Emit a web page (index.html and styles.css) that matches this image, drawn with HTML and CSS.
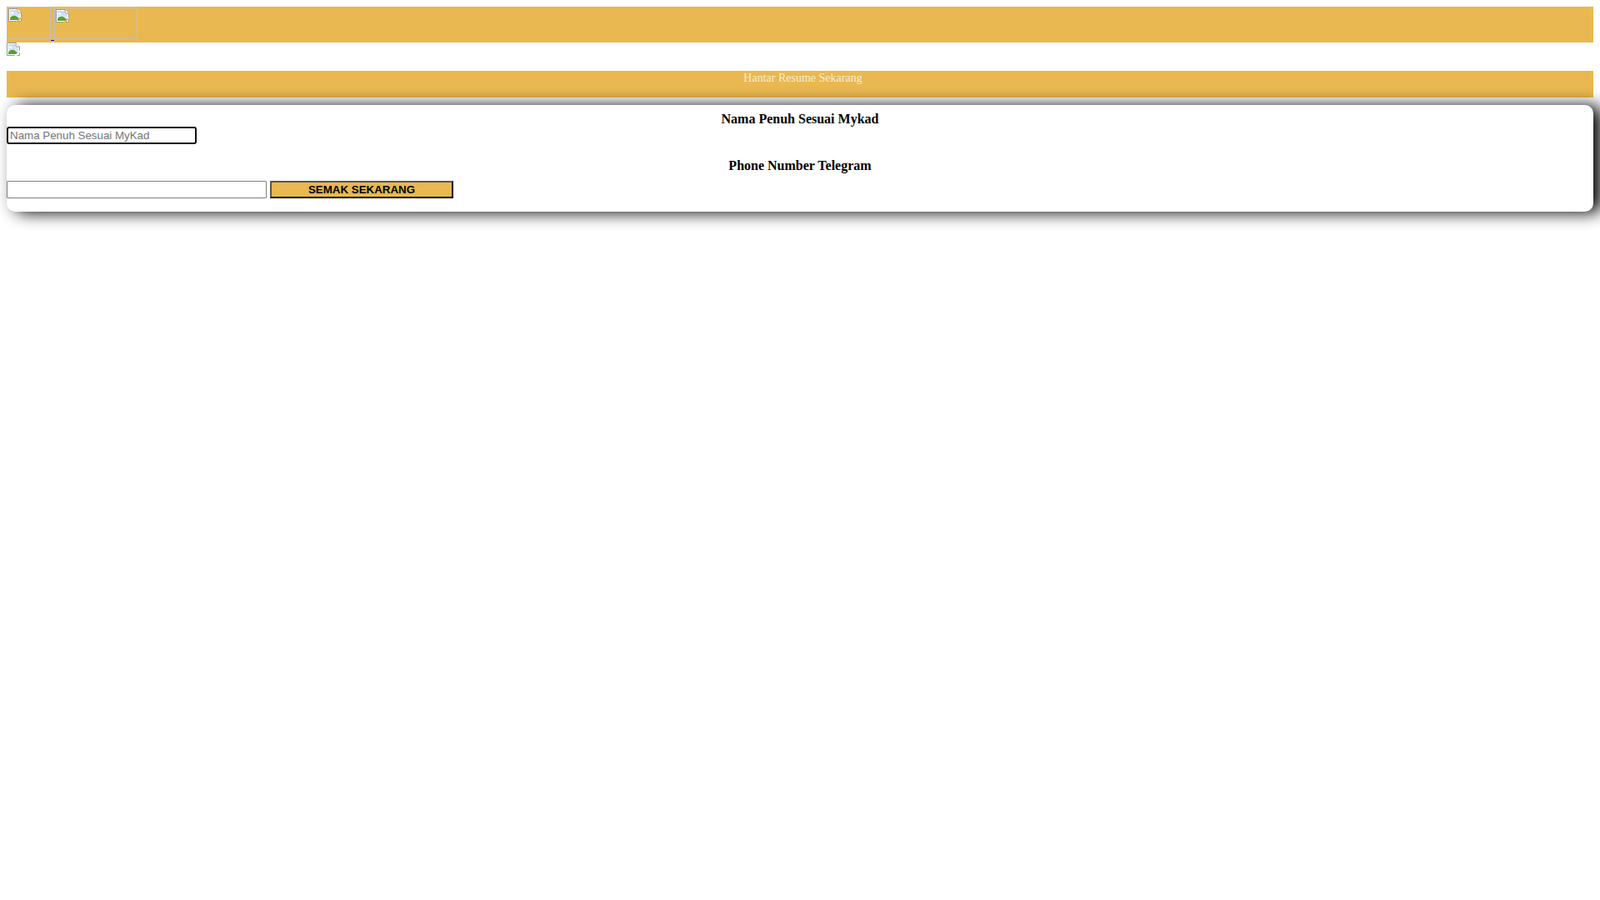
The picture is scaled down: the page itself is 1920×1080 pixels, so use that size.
FILE: index.html
```html
<!DOCTYPE html>
<html lang="ms">
<head>
<meta charset="utf-8">
<title>Hantar Resume Sekarang</title>
<link rel="stylesheet" href="styles.css">
</head>
<body>
<svg class="defs" width="0" height="0" aria-hidden="true">
  <defs>
    <linearGradient id="sky" x1="0" y1="0" x2="0" y2="1"><stop offset="0" stop-color="#c5d6f7"/><stop offset="1" stop-color="#e8effd"/></linearGradient>
    <symbol id="broken-base" viewBox="0 0 16 16">
      <path d="M.5.5H11L15.5 5V15.5H.5Z" fill="#fff" stroke="#9a9a9a"/>
      <path d="M2 2H10V6H14V14H2Z" fill="url(#sky)"/>
      <path d="M3 5.5C3.5 4 5.5 4 6 5.3 7 5.3 7 6.5 6 6.5H3.5C2.5 6.5 2.5 5.5 3 5.5Z" fill="#fff"/>
      <path d="M2 14V11.5C4 9 7 8 9.5 9.5L14 13V14Z" fill="#5aa02c"/>
      <path d="M11 .5V5H15.5" fill="#fff" stroke="#9a9a9a"/>
    </symbol>
    <symbol id="broken-gold" viewBox="0 0 16 16">
      <use href="#broken-base"/>
      <path d="M9 16 16 9.5V11.5L12 16Z" fill="#e9b850"/>
    </symbol>
    <symbol id="broken-white" viewBox="0 0 16 16">
      <use href="#broken-base"/>
      <path d="M9 16 16 9.5V11.5L12 16Z" fill="#fff"/>
    </symbol>
  </defs>
</svg>
<div class="top-bar">
  <a class="logo-link" href="#"><span class="placeholder placeholder-small"><svg class="broken" viewBox="0 0 16 16"><use href="#broken-gold"/></svg></span><span class="link-gap"></span></a>
  <span class="placeholder placeholder-wide"><svg class="broken" viewBox="0 0 16 16"><use href="#broken-gold"/></svg></span>
</div>
<div class="image-row"><svg class="broken" viewBox="0 0 16 16"><use href="#broken-white"/></svg></div>
<div class="banner"><span class="banner-text">Hantar Resume Sekarang</span></div>
<div class="card">
  <h3 class="label label-first">Nama Penuh Sesuai Mykad</h3>
  <input class="field field-name" type="text" placeholder="Nama Penuh Sesuai MyKad">
  <h3 class="label label-second">Phone Number Telegram</h3>
  <div class="phone-row">
    <input class="field-phone" type="text">
    <button class="submit" type="button">SEMAK SEKARANG</button>
  </div>
</div>
</body>
</html>
```
FILE: styles.css
```css
html { height: 100%; }
body { box-sizing: border-box; height: 100%; margin: 0; padding: 8px; font-family: "Liberation Serif", serif; font-size: 16px; color: #000; }

.top-bar { display: flex; align-items: flex-start; height: 43px; background: #e9b850; }
.logo-link { display: flex; align-items: flex-start; text-decoration: none; }
.placeholder { display: block; box-sizing: border-box; border: 1px solid #c0c0c0; padding: 1px; }
.placeholder-small { width: 53px; height: 39px; }
.placeholder-wide { width: 100px; height: 38px; margin-top: 1px; }
.link-gap { display: block; width: 4px; height: 1px; margin-top: 40px; background: #0000ee; }
.broken { display: block; width: 16px; height: 16px; }

.image-row { height: 34px; }

.banner { height: 32px; background: #e9b850; text-align: center; }
.banner-text { display: block; padding-left: 7px; font-size: 14px; line-height: 17px; color: #f5edd8; }

.card { height: 128px; margin-top: 9px; background: #fff; border-radius: 10px; box-shadow: 10px 1px 20px 0 #000; }
.label { margin: 0; font-size: 16px; font-weight: bold; line-height: 18px; text-align: center; }
.label-first { padding-top: 8px; }
.label-second { margin-top: 17px; }

.field { display: block; box-sizing: border-box; width: 228px; height: 21px; margin-top: 0; padding: 1px 2px; border: 2px solid #101010; border-radius: 3px; outline: none; font: 13.333px "Liberation Sans", sans-serif; background: #fff; }
.field::placeholder { color: #757575; opacity: 1; }

.phone-row { display: flex; gap: 4px; margin-top: 9px; }
.field-phone { box-sizing: border-box; width: 312px; height: 21px; padding: 1px 2px; border: 1px solid #808080; border-radius: 1px; outline: none; background: #fff; }
.submit { box-sizing: border-box; width: 220px; height: 21px; padding: 0; border-width: 2px; border-style: solid; border-color: #555 #000 #000 #555; background: #e9b850; color: #000; font: bold 13.333px "Liberation Sans", sans-serif; }

.defs { position: absolute; }
```
